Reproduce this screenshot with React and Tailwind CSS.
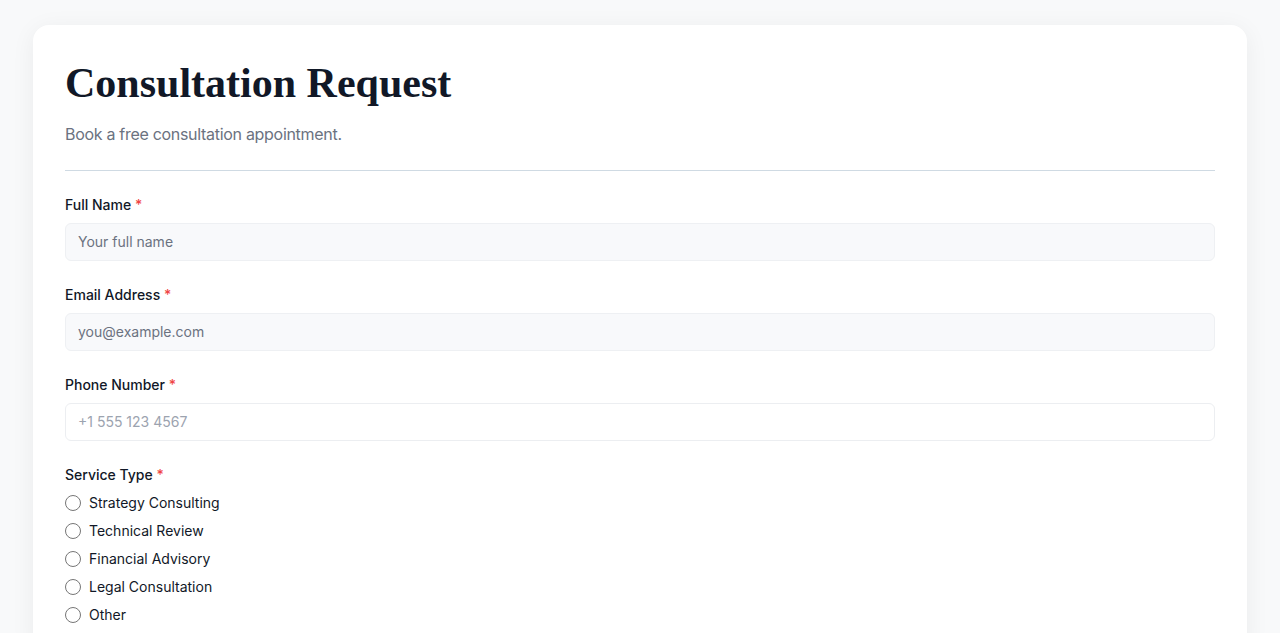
import React from "react";

const fields = [
    { label: "Full Name", placeholder: "Your full name", filled: true },
    { label: "Email Address", placeholder: "you@example.com", filled: true },
    { label: "Phone Number", placeholder: "+1 555 123 4567", filled: false },
];

const services = [
    "Strategy Consulting",
    "Technical Review",
    "Financial Advisory",
    "Legal Consultation",
    "Other",
];

export default function App() {
    return (
        <div
            className="min-h-screen bg-[#f8f9fa] px-[33px] pt-[25px] pb-10"
            style={{ fontFamily: "Inter, 'Noto Sans', sans-serif" }}
        >
            <div className="bg-white rounded-2xl shadow-[0_4px_24px_rgba(0,0,0,0.06)] p-8">
                {/* Header */}
                <h1
                    className="text-[42px] leading-[1.25] font-bold text-[#111827]"
                    style={{ fontFamily: "'Liberation Serif', 'Times New Roman', serif" }}
                >
                    Consultation Request
                </h1>
                <p className="mt-3 text-base leading-6 text-[#6b7280] tracking-[-0.3px]">
                    Book a free consultation appointment.
                </p>

                <div className="mt-6 border-b border-[#cfdae3]" />

                {/* Form */}
                <form className="mt-6 space-y-6">
                    {fields.map((f) => (
                        <div key={f.label}>
                            <label className="block text-sm leading-5 font-medium text-[#111827] mb-2">
                                {f.label} <span className="text-[#ef4444]">*</span>
                            </label>
                            <input
                                type="text"
                                placeholder={f.placeholder}
                                className={
                                    f.filled
                                        ? "w-full h-[38px] px-3 text-sm rounded-md border border-[#eef0f3] bg-[#f8f9fb] placeholder:text-[#6b7280] outline-none"
                                        : "w-full h-[38px] px-3 text-sm rounded-md border border-[#eceef1] bg-white placeholder:text-[#9ca3af] outline-none"
                                }
                            />
                        </div>
                    ))}

                    <div>
                        <label className="block text-sm leading-5 font-medium text-[#111827] mb-2">
                            Service Type <span className="text-[#ef4444]">*</span>
                        </label>
                        <div className="space-y-2">
                            {services.map((s) => (
                                <label key={s} className="flex items-center gap-2 h-5 text-sm text-[#111827]">
                                    <span className="w-4 h-4 rounded-full border border-[#767676] bg-white shrink-0" />
                                    {s}
                                </label>
                            ))}
                        </div>
                    </div>
                </form>
            </div>
        </div>
    );
}
